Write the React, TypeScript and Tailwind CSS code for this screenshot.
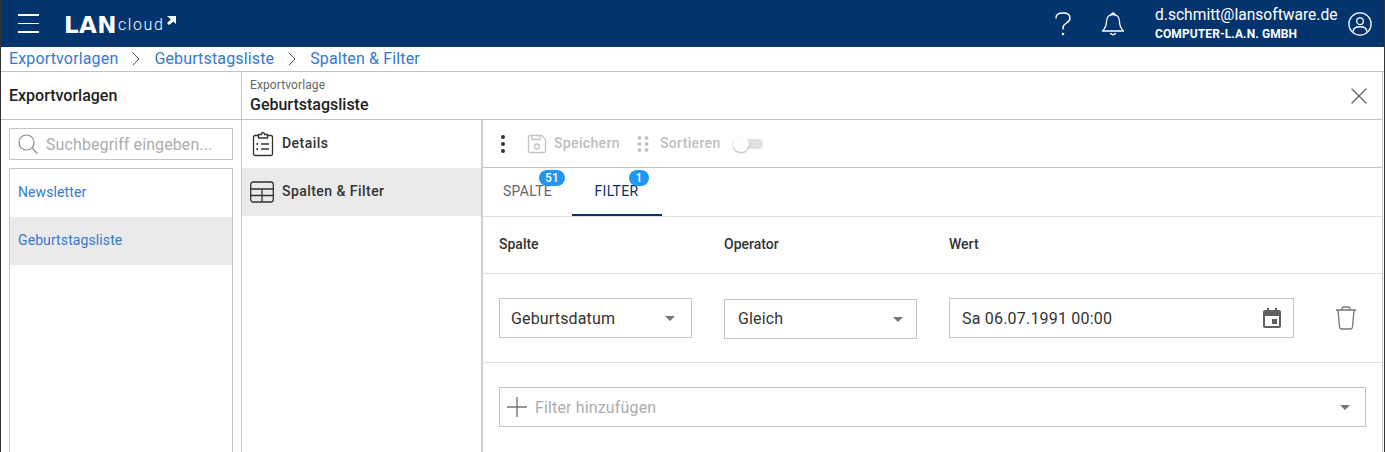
import React from 'react';
import { ChevronRight, X, EllipsisVertical } from 'lucide-react';

const Caret = () => (
  <svg width="10" height="5" viewBox="0 0 10 5" className="shrink-0">
    <path d="M0 0h10L5 5z" fill="#757575" />
  </svg>
);

const Logo = () => (
  <div className="flex items-end text-white h-[16px] mt-[2px]">
    <span className="[font-family:'DejaVu_Sans',sans-serif] text-[23px] leading-[16px] font-bold tracking-[0.4px]">LAN</span>
    <span className="ml-[1px] text-[16px] leading-[16px] font-light tracking-[1.6px]">cloud</span>
    <svg width="10" height="9" viewBox="0 0 10 9" className="ml-[2px] mb-[8px]">
      <path d="M1 0h9v8L7.500 5.500 3 9 1 7l4-3.500z" fill="white" />
    </svg>
  </div>
);

const SelectBox = ({ label, className, labelClass = '' }: { label: string; className: string; labelClass?: string }) => (
  <div className={`h-10 flex items-center justify-between border border-[#c4c4c4] text-[16px] tracking-[0.15px] text-[#333] ${className}`}>
    <span className={labelClass}>{label}</span>
    <Caret />
  </div>
);

const Badge = ({ value, className }: { value: string; className: string }) => (
  <span className={`absolute top-[2px] h-[16px] rounded-full bg-[#2196f3] text-white text-[12px] font-medium leading-[16px] text-center ${className}`}>
    {value}
  </span>
);

export default function App() {
  return (
    <div className="w-[1385px] h-[452px] overflow-hidden flex flex-col bg-white border-x border-[#333] [font-family:Roboto,sans-serif]">
      {/* top bar */}
      <header className="h-[47px] shrink-0 bg-[#03346e] flex items-center pl-[17px] pr-[12px] text-white">
        <div className="w-[21px] flex flex-col gap-[7px]">
          <div className="h-[1.5px] bg-white" />
          <div className="h-[1.5px] bg-white" />
          <div className="h-[1.5px] bg-white" />
        </div>
        <div className="ml-[25px]">
          <Logo />
        </div>
        <div className="flex-1" />
        <svg width="18" height="26" viewBox="0 0 18 26" fill="none" stroke="white" strokeWidth="1.4" strokeLinecap="round">
          <path d="M2 7q0-5 7-5t7 5q0 3-3.500 5T9 17v1" />
          <circle cx="9" cy="23" r="0.6" fill="white" />
        </svg>
        <svg width="24" height="26" viewBox="0 0 24 26" fill="none" stroke="white" strokeWidth="1.3" strokeLinejoin="round" strokeLinecap="round" className="ml-[29px]">
          <path d="M12 3.500c-4 0-6.500 3-6.500 7 0 5-1.500 7-4 9.500h21c-2.500-2.500-4-4.500-4-9.500 0-4-2.500-7-6.500-7z" />
          <path d="M10.500 3.500c0-2 3-2 3 0M9.500 22.500q2.500 2.500 5 0" />
        </svg>
        <div className="ml-[30px] w-[182px] flex flex-col">
          <span className="text-[15.6px] leading-[19px] whitespace-nowrap">d.schmitt@lansoftware.de</span>
          <span className="mt-[2px] text-[12px] leading-[14px] font-bold tracking-[0.1px] whitespace-nowrap">COMPUTER-L.A.N. GMBH</span>
        </div>
        <svg width="24" height="24" viewBox="0 0 26 26" fill="none" stroke="white" strokeWidth="1.4" className="ml-[11px]">
          <circle cx="13" cy="13" r="12" />
          <circle cx="13" cy="10" r="3.600" />
          <path d="M5.500 21.500c0-3.500 3-5.500 7.500-5.500s7.500 2 7.500 5.500" />
        </svg>
      </header>

      {/* breadcrumb */}
      <nav className="h-[25px] shrink-0 border-b border-[#c4c4c4] flex items-center pl-[8px] text-[16px] text-[#3579cf] tracking-[0.15px]">
        <span>Exportvorlagen</span>
        <ChevronRight size={24} strokeWidth={1} className="mx-[6px] text-[#555]" />
        <span>Geburtstagsliste</span>
        <ChevronRight size={24} strokeWidth={1} className="mx-[6px] text-[#555]" />
        <span>Spalten &amp; Filter</span>
      </nav>

      <div className="flex-1 flex min-h-0 pr-[1px]">
        {/* list panel */}
        <aside className="w-[241px] shrink-0 flex flex-col border-r border-[#c4c4c4]">
          <div className="h-[48px] shrink-0 border-b border-[#c4c4c4] flex items-center pl-[8px] text-[16px] font-medium text-[#212121]">
            Exportvorlagen
          </div>
          <div className="flex-1 flex flex-col min-h-0 pt-[8px] px-[8px]">
            <div className="h-[32px] shrink-0 border border-[#c4c4c4] flex items-center pl-[8px] text-[16px] text-[#acacac] tracking-[0.1px]">
              <svg width="20" height="20" viewBox="0 0 20 20" fill="none" stroke="#8f8f8f" strokeWidth="1.2" className="mr-[8px] shrink-0">
                <circle cx="8.500" cy="8.500" r="7.500" />
                <path d="M14 14l5.500 5.500" />
              </svg>
              <span className="pt-[1px]">Suchbegriff eingeben...</span>
            </div>
            <div className="mt-[8px] flex-1 border border-[#c4c4c4] border-b-0 text-[14px] text-[#3579cf] tracking-[0.1px]">
              <div className="h-[48px] flex items-center pl-[8px] pb-[2px]">Newsletter</div>
              <div className="h-[48px] flex items-center pl-[8px] pb-[2px] bg-[#eaeaea]">Geburtstagsliste</div>
            </div>
          </div>
        </aside>

        {/* detail panel */}
        <main className="flex-1 min-w-0 flex flex-col border-r border-[#c4c4c4]">
          <div className="h-[48px] shrink-0 border-b border-[#c4c4c4] flex items-center justify-between pl-[8px] pr-[9px]">
            <div className="flex flex-col">
              <span className="text-[12px] leading-[14px] text-[#666] tracking-[0.1px]">Exportvorlage</span>
              <span className="mt-[4px] text-[16px] leading-[18px] font-medium text-[#212121]">Geburtstagsliste</span>
            </div>
            <X size={28} strokeWidth={1.2} className="text-[#666]" />
          </div>

          <div className="flex-1 flex min-h-0">
            {/* sections */}
            <div className="w-[241px] shrink-0 border-r-2 border-[#d0d0d0] text-[14px] font-medium text-[#333] tracking-[0.45px]">
              <div className="h-[48px] flex items-center pl-[10px]">
                <svg width="22" height="26" viewBox="0 0 22 26" fill="none" stroke="#333" strokeWidth="1.3">
                  <path d="M6.500 4.500H3q-1.500 0-1.500 1.500v17q0 1.500 1.500 1.500h16q1.500 0 1.500-1.500V6q0-1.500-1.500-1.500h-3.500" />
                  <path d="M6.500 7V3.500h3q0-2 1.500-2t1.500 2h3V7z" />
                  <path d="M9 13h8M9 18h8" />
                  <path d="M4.500 13h1.500M4.500 18h1.500" strokeWidth="1.8" />
                </svg>
                <span className="ml-[8px] pb-[2px]">Details</span>
              </div>
              <div className="h-[48px] flex items-center pl-[8px] bg-[#eaeaea]">
                <svg width="24" height="22" viewBox="0 0 24 22" fill="none" stroke="#333" strokeWidth="1.3">
                  <rect x="0.700" y="1" width="22.600" height="20" rx="2.500" />
                  <path d="M0.700 8h22.600M0.700 14.500h22.600M12 8v13" />
                </svg>
                <span className="ml-[8px] pb-[2px]">Spalten &amp; Filter</span>
              </div>
            </div>

            {/* filter editor */}
            <div className="flex-1 min-w-0 flex flex-col">
              <div className="h-[48px] shrink-0 border-b border-[#c4c4c4] flex items-center pl-[8px] text-[14px] font-medium text-[#bdbdbd] tracking-[0.35px]">
                <EllipsisVertical size={24} strokeWidth={2} className="text-[#333]" />
                <svg width="20" height="20" viewBox="0 0 20 20" fill="none" stroke="#c4c4c4" strokeWidth="1.3" className="ml-[12px]">
                  <path d="M3 1.500h11.500l4 4V17q0 1.500-1.500 1.500H3q-1.500 0-1.500-1.500V3q0-1.500 1.500-1.500z" />
                  <path d="M5 1.500v4h8v-4" />
                  <circle cx="10" cy="12.500" r="2.500" />
                </svg>
                <span className="ml-[7px]">Speichern</span>
                <svg width="12" height="18" viewBox="0 0 12 18" fill="#c4c4c4" className="ml-[17px]">
                  <circle cx="2.500" cy="3" r="2" />
                  <circle cx="9.500" cy="3" r="2" />
                  <circle cx="2.500" cy="9" r="2" />
                  <circle cx="9.500" cy="9" r="2" />
                  <circle cx="2.500" cy="15" r="2" />
                  <circle cx="9.500" cy="15" r="2" />
                </svg>
                <span className="ml-[11px]">Sortieren</span>
                <div className="ml-[13px] relative w-[29px] h-[10px] rounded-full bg-[#e0e0e0]">
                  <div className="absolute -left-[1px] -top-[3px] w-[16px] h-[16px] rounded-full bg-white shadow-[0_1px_2px_rgba(0,0,0,0.35)]" />
                </div>
              </div>

              <div className="h-[49px] shrink-0 border-b border-[#e0e0e0] flex text-[14px] tracking-[0.3px]">
                <div className="relative w-[89px] h-full flex items-center justify-center pb-[2px] text-[#666]">
                  SPALTE
                  <Badge value="51" className="left-[56px] w-[26px]" />
                </div>
                <div className="relative w-[90px] h-full flex items-center justify-center pr-[1px] text-[#03346e] border-b-2 border-[#03346e]">
                  FILTER
                  <Badge value="1" className="left-[57px] w-[20px]" />
                </div>
              </div>

              <div className="h-[57px] shrink-0 border-b border-[#e0e0e0] flex items-center pl-[16px] pb-[2px] text-[14px] font-medium text-[#333]">
                <span className="w-[225px]">Spalte</span>
                <span className="w-[225px]">Operator</span>
                <span>Wert</span>
              </div>

              <div className="h-[89px] shrink-0 border-b border-[#e0e0e0] flex items-center pl-[16px]">
                <SelectBox label="Geburtsdatum" labelClass="pt-[1px]" className="w-[193px] pl-[11px] pr-[16px]" />
                <SelectBox label="Gleich" className="ml-[32px] mt-[2px] w-[193px] pl-[13px] pr-[13px]" />
                <div className="ml-[32px] w-[345px] h-10 border border-[#c4c4c4] flex items-center justify-between pl-[12px] pr-[11px] text-[16px] tracking-[0.2px] text-[#333]">
                  <span className="pt-[1px]">Sa 06.07.1991 00:00</span>
                  <svg width="20" height="22" viewBox="0 0 20 22" fill="#616161">
                    <path d="M5 1h2v2h6V1h2v2h2q2 0 2 2v14q0 2-2 2H3q-2 0-2-2V5q0-2 2-2h2zM3 9v10h14V9z" />
                    <rect x="10" y="12" width="5" height="5" />
                  </svg>
                </div>
                <svg width="22" height="26" viewBox="0 0 22 26" fill="none" stroke="#757575" strokeWidth="1.3" className="ml-[41px]">
                  <path d="M1 5h20M3 5l1.500 17q0.200 2 2 2h9q1.800 0 2-2L19 5" />
                  <path d="M7 5V3.500Q7 2 9 2h4q2 0 2 1.500V5" />
                </svg>
              </div>

              <div className="pt-[24px] pl-[16px] pr-[16px]">
                <div className="h-10 border border-[#c4c4c4] flex items-center pl-[7px] pr-[15px] text-[16px] tracking-[0.15px] text-[#acacac]">
                  <svg width="20" height="20" viewBox="0 0 20 20" stroke="#757575" strokeWidth="1.4" className="shrink-0">
                    <path d="M0 10h20M10 0v20" />
                  </svg>
                  <span className="ml-[8px] pt-[1px] flex-1">Filter hinzufügen</span>
                  <Caret />
                </div>
              </div>
            </div>
          </div>
        </main>
      </div>
    </div>
  );
}
